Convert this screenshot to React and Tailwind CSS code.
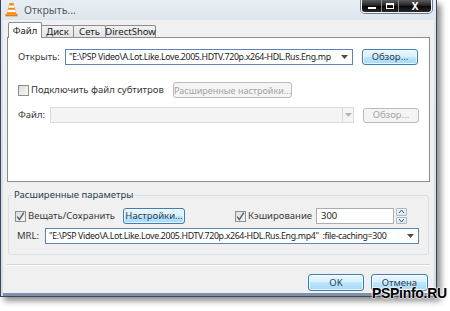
import React from "react";

const font = { fontFamily: '"Noto Sans", "Open Sans", sans-serif' };

const blueBtn =
  "flex items-center justify-center whitespace-nowrap rounded-[3px] border border-[#3c7fb1] bg-[linear-gradient(#eaf6fd_0%,#d9f0fc_49%,#bee6fd_50%,#a7d9f5_100%)] text-[#2b3e55] shadow-[inset_0_0_0_1px_rgba(255,255,255,0.7)]";
const disabledBtn =
  "flex items-center justify-center whitespace-nowrap rounded-[3px] border border-[#b7bcc0] bg-[#f4f4f4] text-[#a3a3a3]";

const Arrow = ({ color = "#4b4b4b" }) => (
  <svg width="7" height="4" viewBox="0 0 7 4">
    <path d="M0 0h7L3.5 4z" fill={color} />
  </svg>
);

const CheckBox = ({ checked }) => (
  <span className="flex h-[11px] w-[11px] shrink-0 items-center justify-center border border-[#8e8f8f] bg-[linear-gradient(135deg,#dcdcdc,#f7f7f7)]">
    {checked && (
      <svg width="9" height="9" viewBox="0 0 9 9">
        <path d="M1.2 4.6 3.4 7.6 7.8 0.6" fill="none" stroke="#4a5c78" strokeWidth="1.4" />
      </svg>
    )}
  </span>
);

const VlcIcon = () => (
  <svg width="13" height="15" viewBox="0 0 13 15">
    <path d="M4.6 1h3.8l3 11H1.6z" fill="#f08a0c" />
    <path d="M4.1 3.4h4.8l.6 2.3H3.5zM2.9 7.8h7.2l.7 2.4H2.2z" fill="#ffffff" />
    <path d="M0.5 12h12v2.3H0.5z" fill="#e57500" />
    <path d="M1.5 12.3h10v0.8h-10z" fill="#ffb25a" />
  </svg>
);

const Tab = ({ label, active, w }) =>
  active ? (
    <div
      className={`relative z-10 flex h-[16px] items-start justify-center rounded-t-[2px] border border-b-0 border-[#898c95] bg-white pt-[3px] text-[#1b1b1b] ${w}`}
    >
      {label}
    </div>
  ) : (
    <div
      className={`-ml-px mb-[1px] flex h-[12px] items-center justify-center rounded-t-[2px] border border-b-0 border-[#898c95] bg-[linear-gradient(#f2f2f2,#e3e3e3)] text-[#1b1b1b] ${w}`}
    >
      {label}
    </div>
  );

export default function App() {
  const path = "E:\\PSP Video\\A.Lot.Like.Love.2005.HDTV.720p.x264-HDL.Rus.Eng.mp";
  return (
    <div className="relative h-[311px] w-[450px] overflow-hidden bg-white text-[9.5px] leading-none text-[#383838]" style={font}>
      {/* window */}
      <div className="flex h-[297px] w-[437px] flex-col border-x border-b border-[#3a465a] bg-[linear-gradient(#e8edf3,#d9e1eb_30px,#d3dbe6)] shadow-[4px_4px_6px_rgba(0,0,0,0.45)]">
        {/* title bar */}
        <div className="flex h-[20px] shrink-0 items-start px-[2px]">
          <div className="ml-[2px] mt-[2px]">
            <VlcIcon />
          </div>
          <span className="ml-[6px] mt-[5px] text-[10.5px] text-[#505a66] [text-shadow:0_0_6px_#ffffff]">Открыть...</span>
          <div className="ml-auto mr-[2px] flex h-[13px] overflow-hidden rounded-b-[4px] border border-t-0 border-[#f4f6f8] shadow-[0_0_0_1px_#6f7b8c]">
            <div className="flex w-[19px] items-end justify-center bg-[linear-gradient(#5c5c5c,#262626_45%,#050505_50%,#2a2a2a)] pb-[3px]">
              <span className="h-[2px] w-[8px] bg-white" />
            </div>
            <div className="flex w-[17px] items-center justify-center border-l border-[#8a8a8a] bg-[linear-gradient(#5c5c5c,#262626_45%,#050505_50%,#2a2a2a)]">
              <span className="h-[6px] w-[8px] border border-t-2 border-white" />
            </div>
            <div className="flex w-[33px] items-center justify-center border-l border-[#8a8a8a] bg-[linear-gradient(#5c5c5c,#262626_45%,#050505_50%,#2a2a2a)] text-[10px] font-bold text-white">
              X
            </div>
          </div>
        </div>

        {/* client */}
        <div className="mx-[2px] flex flex-1 flex-col bg-[#f0f0f0]">
          {/* tabs */}
          <div className="ml-[5px] mt-[2px] flex h-[16px] items-end">
            <Tab label="Файл" active w="w-[34px]" />
            <Tab label="Диск" w="w-[33px]" />
            <Tab label="Сеть" w="w-[33px]" />
            <Tab label="DirectShow" w="w-[51px]" />
          </div>
          <div className="mx-[4px] -mt-px h-[145px] border border-[#898c95] bg-white pl-[10px] pt-[11px]">
            {/* open row */}
            <div className="flex items-center">
              <span className="w-[47px]">Открыть:</span>
              <div className="flex h-[16px] w-[288px] items-center border border-[#5b84b5] bg-white pl-[3px] pr-[4px]">
                <span className="flex-1 whitespace-nowrap text-[8.8px] tracking-[-0.35px] text-[#222]">"{path}</span>
                <span className="ml-[4px]">
                  <Arrow />
                </span>
              </div>
              <button className={`${blueBtn} ml-[9px] h-[16px] w-[56px]`}>Обзор...</button>
            </div>
            {/* subtitles row */}
            <div className="mt-[17px] flex items-center">
              <div className="flex w-[155px] items-center gap-[2px]">
                <CheckBox />
                <span>Подключить файл субтитров</span>
              </div>
              <button className={`${disabledBtn} h-[16px] w-[119px] text-[9px]`}>Расширенные настройки...</button>
            </div>
            {/* file row */}
            <div className="mt-[9px] flex items-center">
              <span className="w-[32px]">Файл:</span>
              <div className="flex h-[16px] w-[304px] items-stretch border border-[#dadada] bg-[#f4f4f4]">
                <span className="flex-1" />
                <span className="flex w-[11px] items-center justify-center border-l border-[#dadada]">
                  <Arrow color="#b5b5b5" />
                </span>
              </div>
              <button className={`${disabledBtn} ml-[9px] h-[15px] w-[56px]`}>Обзор...</button>
            </div>
          </div>

          {/* advanced group */}
          <div className="relative mx-[5px] mt-[13px] h-[60px] rounded-[3px] border border-[#d5dfe5] pl-[6px] pt-[12px]">
            <span className="absolute left-[3px] top-[-6px] bg-[#f0f0f0] px-[2px] text-[#2b3a4e]">Расширенные параметры</span>
            <div className="flex items-center">
              <div className="flex w-[108px] items-center gap-[2px]">
                <CheckBox checked />
                <span>Вещать/Сохранить</span>
              </div>
              <button className={`${blueBtn} h-[16px] w-[62px]`}>Настройки...</button>
              <div className="ml-[50px] flex w-[81px] items-center gap-[2px]">
                <CheckBox checked />
                <span>Кэширование</span>
              </div>
              <div className="flex h-[16px] w-[78px] items-center border border-[#abadb3] bg-white pl-[4px] text-[#222]">300</div>
              <div className="ml-[2px] flex h-[16px] w-[11px] flex-col gap-px">
                <span className="flex flex-1 items-center justify-center rounded-[1px] border border-[#a9b9c9] bg-[linear-gradient(#f3f8fc,#dbe8f3)]">
                  <svg width="5" height="3" viewBox="0 0 5 3"><path d="M0 3 2.5 0 5 3" fill="none" stroke="#3d4f66" strokeWidth="1" /></svg>
                </span>
                <span className="flex flex-1 items-center justify-center rounded-[1px] border border-[#a9b9c9] bg-[linear-gradient(#f3f8fc,#dbe8f3)]">
                  <svg width="5" height="3" viewBox="0 0 5 3"><path d="M0 0 2.5 3 5 0" fill="none" stroke="#3d4f66" strokeWidth="1" /></svg>
                </span>
              </div>
            </div>
            <div className="mt-[4px] flex items-center">
              <span className="ml-[2px] w-[28px]">MRL:</span>
              <div className="flex h-[16px] w-[374px] items-center border border-[#5b84b5] bg-white pl-[3px] pr-[4px]">
                <span className="flex-1 whitespace-nowrap text-[8.8px] tracking-[-0.35px] text-[#222]">
                  "{path}4"&nbsp; :file-caching=300
                </span>
                <Arrow />
              </div>
            </div>
          </div>

          {/* separator */}
          <div className="mx-[4px] mt-[9px] h-[2px] border-t border-b border-t-[#d6d6d6] border-b-white" />

          {/* buttons */}
          <div className="mt-[8px] flex justify-end gap-[7px] pr-[6px]">
            <button className={`${blueBtn} h-[17px] w-[56px]`}>OK</button>
            <button className={`${blueBtn} h-[17px] w-[57px]`}>Отмена</button>
          </div>
        </div>
        <div className="mx-[2px] h-[3px] shrink-0 bg-[#7f90a8]" />
      </div>

      {/* watermark */}
      <span
        className="absolute left-[372px] top-[286px] text-[14px] font-bold tracking-[-0.3px] text-black [text-shadow:0_0_2px_#fff,0_0_2px_#fff,0_0_2px_#fff]"
        style={{ fontFamily: '"Liberation Sans", Arial, sans-serif' }}
      >
        PSPinfo.RU
      </span>
    </div>
  );
}
